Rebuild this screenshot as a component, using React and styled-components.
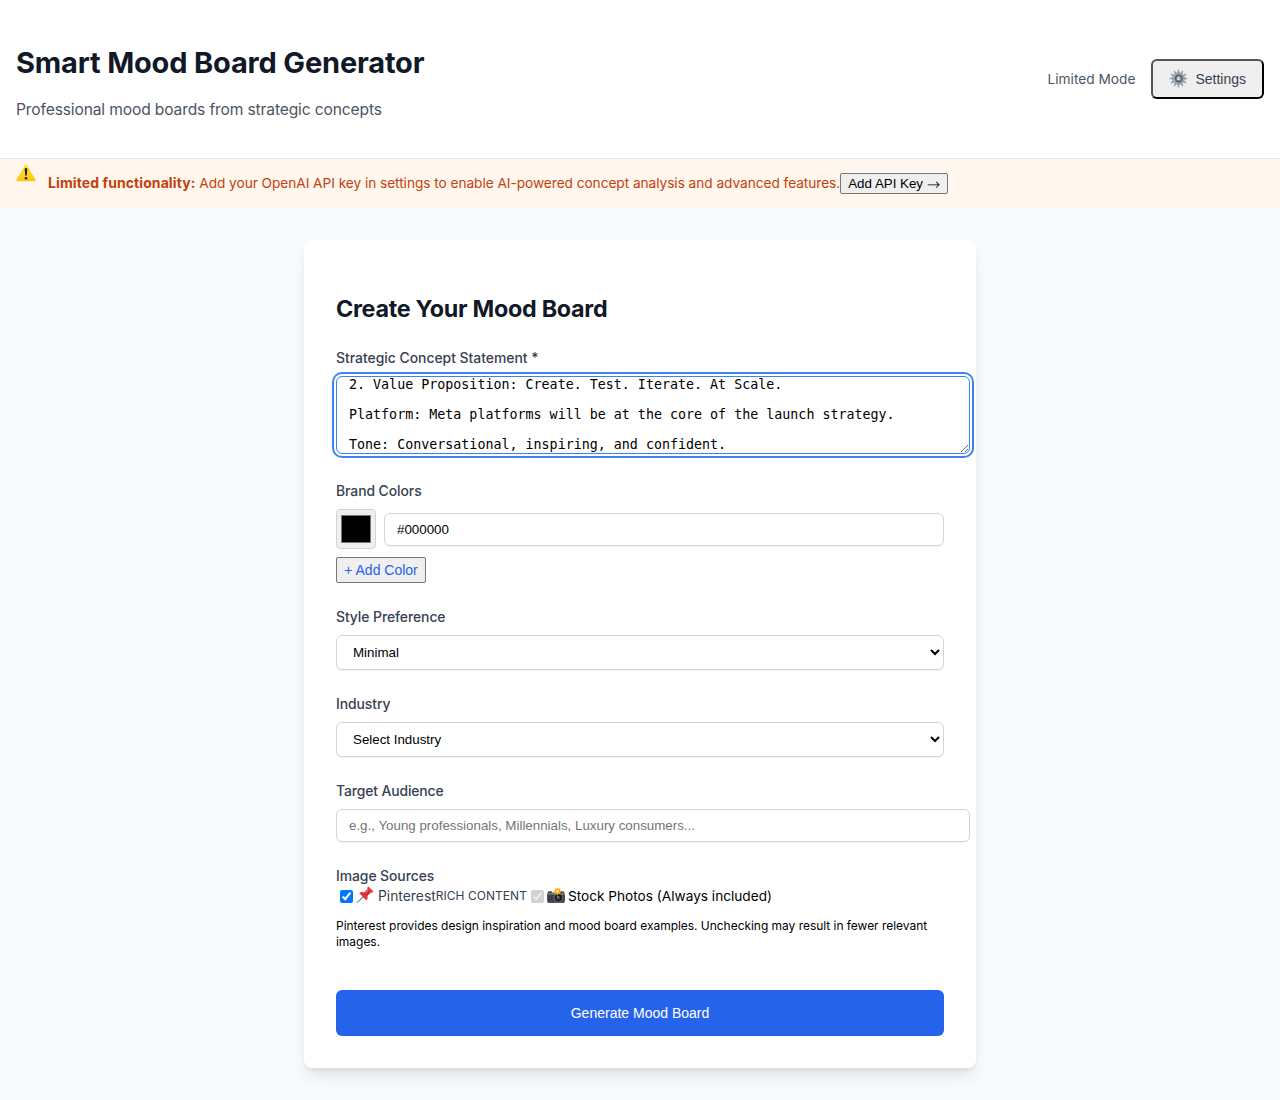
import React from "react";
import styled, { createGlobalStyle } from "styled-components";

const GlobalStyle = createGlobalStyle`
  body {
    margin: 0;
    background: #f9fafb;
    font-family: Inter, "Liberation Sans", sans-serif;
    color: #000;
  }
`;

const Page = styled.div`
  min-height: 1100px;
  background: #f9fafb;
`;

const Header = styled.header`
  display: flex;
  align-items: center;
  justify-content: space-between;
  height: 158px;
  padding: 0 16px;
  background: #fff;
  border-bottom: 1px solid #e5e7eb;
`;

const Heading = styled.div`
  padding-top: 9px;
`;

const Title = styled.h1`
  margin: 0 0 17px;
  font-size: 29px;
  line-height: 36px;
  font-weight: 700;
  letter-spacing: -0.17px;
  color: #111827;
`;

const Subtitle = styled.p`
  margin: 0;
  font-size: 15.6px;
  line-height: 24px;
  letter-spacing: -0.14px;
  color: #4b5563;
`;

const HeaderActions = styled.div`
  display: flex;
  align-items: center;
  gap: 16px;
`;

const Mode = styled.span`
  font-size: 13.7px;
  line-height: 20px;
  color: #4b5563;
`;

const SettingsButton = styled.button`
  display: flex;
  align-items: center;
  height: 40px;
  padding: 0 16px;
  gap: 7px;
  border: 2px outset #000;
  border-radius: 6px;
  background: #efefef;
  color: #374151;
  font: 14px/20px "Liberation Sans", sans-serif;
`;

const Banner = styled.div`
  display: flex;
  align-items: flex-start;
  gap: 12px;
  height: 49px;
  box-sizing: border-box;
  padding: 4px 16px 0;
  background: #fff7ed;
`;

const BannerText = styled.p`
  display: flex;
  align-items: center;
  margin: 10px 0 0;
  height: 21px;
  font-size: 14px;
  line-height: 17px;
  white-space: pre;
  color: #c2410c;
`;

const BannerLead = styled.strong`
  padding-bottom: 2px;
  letter-spacing: 0.09px;
`;

const BannerMessage = styled.span`
  font-size: 13.7px;
  letter-spacing: -0.05px;
`;

const SmallButton = styled.button`
  box-sizing: border-box;
  height: ${(p) => p.$height}px;
  width: ${(p) => p.$width}px;
  padding: 0;
  border: 1px solid #767676;
  border-radius: 2px;
  background: #efefef;
  color: ${(p) => p.$color || "#000"};
  font: ${(p) => p.$size}px "Liberation Sans", sans-serif;
  white-space: nowrap;
`;

const Arrow = styled.span`
  font-family: "DejaVu Sans", sans-serif;
  font-size: 16px;
  font-weight: 200;
  line-height: 0;
  vertical-align: -2px;
`;

const Card = styled.main`
  box-sizing: border-box;
  width: 672px;
  height: 828px;
  margin: 32px auto 0;
  padding: 53px 32px 0;
  border-radius: 8px;
  background: #fff;
  box-shadow: 0 10px 15px -3px rgba(0, 0, 0, 0.1), 0 4px 6px -4px rgba(0, 0, 0, 0.1);
`;

const CardTitle = styled.h2`
  margin: 0 0 23px;
  font-size: 23.3px;
  line-height: 32px;
  font-weight: 700;
  letter-spacing: -0.27px;
  color: #111827;
`;

const Field = styled.div`
  margin-bottom: ${(p) => p.$gap ?? 24}px;
`;

const Label = styled.label`
  display: block;
  margin-bottom: ${(p) => p.$gap ?? 8}px;
  font-size: 13.9px;
  line-height: 20px;
  font-weight: 500;
  letter-spacing: ${(p) => p.$tracking ?? -0.06}px;
  color: #374151;
`;

const Concept = styled.textarea`
  display: block;
  box-sizing: border-box;
  width: 634px;
  height: 78px;
  padding: 0 12px;
  border: 1px solid #3b82f6;
  border-radius: 6px;
  outline: none;
  box-shadow: 0 0 0 2px #fff, 0 0 0 4px #3b82f6;
  font: 13.333px/15px "DejaVu Sans Mono", monospace;
  color: #000;
  overflow: hidden;
`;

const ColorRow = styled.div`
  display: flex;
  align-items: center;
  gap: 8px;
  margin-bottom: 8px;
`;

const Swatch = styled.input`
  box-sizing: border-box;
  width: 40px;
  height: 40px;
  margin: 0;
  border: 1px solid #d1d5db;
  border-radius: 4px;
  padding: 1px 2px;
  background: #efefef;
`;

const TextInput = styled.input`
  box-sizing: border-box;
  width: ${(p) => p.$width}px;
  height: 33px;
  padding: 0 12px;
  display: block;
  border: 1px solid #d1d5db;
  border-radius: 6px;
  background: #fff;
  box-shadow: 0 1px 2px rgba(0, 0, 0, 0.05);
  font: 13.333px "Liberation Sans", sans-serif;
  color: #000;
  &::placeholder {
    color: #757575;
  }
`;

const Select = styled.select`
  display: block;
  box-sizing: border-box;
  width: 100%;
  height: 35px;
  padding: 0 0 0 12px;
  border: 1px solid #d1d5db;
  border-radius: 6px;
  background: #fff;
  box-shadow: 0 1px 2px rgba(0, 0, 0, 0.05);
  font: 13.333px "Liberation Sans", sans-serif;
  color: #000;
`;

const Sources = styled.div`
  display: flex;
  align-items: center;
  height: 20px;
  font-size: 14px;
  line-height: 20px;
  white-space: nowrap;
`;

const Check = styled.input`
  width: 13px;
  height: 13px;
  margin: 1px 3px 0 4px;
  accent-color: #0075ff;
`;

const SourceName = styled.span`
  margin-left: ${(p) => p.$gap}px;
  font-size: ${(p) => p.$size}px;
  color: ${(p) => p.$color};
`;

const Tag = styled.span`
  font-size: 12px;
  letter-spacing: 0.04px;
  color: #374151;
`;

const Hint = styled.p`
  margin: 12px 0 0;
  font-size: 12px;
  line-height: 16px;
  letter-spacing: -0.035px;
  color: #000;
`;

const Submit = styled.button`
  display: block;
  width: 100%;
  height: 46px;
  margin-top: 40px;
  padding: 0;
  border: 0;
  border-radius: 6px;
  background: #2563eb;
  color: #fff;
  font: 14px "Liberation Sans", sans-serif;
`;

const Icon = styled.svg`
  display: block;
  flex: none;
  margin-top: ${(p) => p.$shift || 0}px;
`;

const teeth = Array.from({ length: 12 }, (_, i) => i * 30);

function Gear() {
  return (
    <Icon width="19" height="19" viewBox="0 0 19 19" $shift={-2}>
      {teeth.map((a) => (
        <path key={a} d="M9 0.6h1l.7 3.4h-2.4z" fill="#94a3ae" transform={`rotate(${a} 9.5 9.5)`} />
      ))}
      <circle cx="9.5" cy="9.5" r="5.7" fill="#a9b5be" stroke="#8b98a2" strokeWidth="1" />
      <circle cx="9.7" cy="9.5" r="3.2" fill="#9ca8b1" stroke="#5c656d" strokeWidth="2" />
      <circle cx="9.7" cy="9.5" r="1.6" fill="#e9eef1" />
      <circle cx="10.1" cy="9.5" r=".6" fill="#56616a" />
    </Icon>
  );
}

function Warning() {
  return (
    <Icon width="20" height="20" viewBox="0 0 20 20">
      <defs>
        <linearGradient id="warn" x1="0" y1="0" x2="0" y2="1">
          <stop offset="0" stopColor="#ffe34b" />
          <stop offset="1" stopColor="#ffc60a" />
        </linearGradient>
      </defs>
      <path d="M9.2 1.4Q10 .5 10.8 1.4L19.6 17.1Q20 18.3 18.8 18.3H1.2Q0 18.3.4 17.1Z" fill="url(#warn)" />
      <path d="M8.7 6.2Q8.6 4.9 10 4.9T11.3 6.2L10.8 12Q10.7 12.8 10 12.8T9.2 12Z" fill="#24221c" />
      <circle cx="10" cy="15.2" r="1.3" fill="#24221c" />
    </Icon>
  );
}

function Pin() {
  return (
    <Icon width="18" height="18" viewBox="0 0 18 18" $shift={-2}>
      <path d="M7.2 9.8 8.2 10.8 1.3 17 .9 16.6Z" fill="#8799a6" stroke="#8799a6" strokeWidth=".5" />
      <path d="M3.3 7.2Q5.3 5.4 8.2 6.4L11.5 3.5Q10.7 1.5 12.2.6L17.4 5.6Q16.4 7.3 14.4 6.4L11.4 9.7Q12.5 12.7 10.5 14.4Z" fill="#df3338" />
      <path d="M8.2 6.4 11.4 9.7 14.4 6.4 11.5 3.5Z" fill="#c5222d" />
      <path d="m8.8 6.4 3.1-2.7 1 1-3 3Z" fill="#f26161" />
      <path d="M12.2.6 17.4 5.6 16 5.8 11.8 1.7Z" fill="#f04a4c" />
    </Icon>
  );
}

function Camera() {
  return (
    <Icon width="18" height="18" viewBox="0 0 18 18" $shift={-1}>
      <path d="M1.5 4.3h3.4v1.2h7V4.2h4.5l1.3 2v8.6q0 1.2-1.2 1.2h-15Q.3 16 .3 14.8V6Z" fill="#4c4d4f" />
      <path d="M.3 6.1h17.4v1.6H.3Z" fill="#77787a" />
      <path d="M.3 8h17.4v5.8H.3Z" fill="#3c3d40" />
      <circle cx="11.4" cy="10.7" r="4.5" fill="#25272b" stroke="#77797d" strokeWidth=".9" />
      <circle cx="11.4" cy="10.7" r="2.5" fill="#445061" stroke="#111318" strokeWidth="1" />
      <circle cx="10.6" cy="9.8" r=".8" fill="#8395aa" />
      <path d="m10.3 0 1.1 2 2.2-1-.7 2.3 2.3.9-2.2 1.2.7 2.1-2.3-.7-1.2 1.9L9.1 6.6l-2.3.4 1.1-2L6 3.7l2.4-.4-.5-2.2 2 1Z" fill="#ffa51f" />
      <circle cx="10.5" cy="4.1" r="1.6" fill="#ffe06c" />
    </Icon>
  );
}

const concept = `2. Value Proposition: Create. Test. Iterate. At Scale.

Platform: Meta platforms will be at the core of the launch strategy.

Tone: Conversational, inspiring, and confident.`;

export default function App() {
  return (
    <Page>
      <GlobalStyle />
      <Header>
        <Heading>
          <Title>Smart Mood Board Generator</Title>
          <Subtitle>Professional mood boards from strategic concepts</Subtitle>
        </Heading>
        <HeaderActions>
          <Mode>Limited Mode</Mode>
          <SettingsButton><Gear />Settings</SettingsButton>
        </HeaderActions>
      </Header>
      <Banner>
        <Warning />
        <BannerText>
          <BannerLead>Limited functionality:</BannerLead>
          <BannerMessage>{" Add your OpenAI API key in settings to enable AI-powered concept analysis and advanced features."}</BannerMessage>
          <SmallButton $width={108} $height={21} $size={13.333}>Add API Key <Arrow>→</Arrow></SmallButton>
        </BannerText>
      </Banner>
      <Card>
        <CardTitle>Create Your Mood Board</CardTitle>
        <Field $gap={27}>
          <Label $tracking={0}>Strategic Concept Statement *</Label>
          <Concept defaultValue={concept} spellCheck={false} />
        </Field>
        <Field>
          <Label>Brand Colors</Label>
          <ColorRow>
            <Swatch type="color" defaultValue="#000000" />
            <TextInput $width={560} defaultValue="#000000" />
          </ColorRow>
          <SmallButton $width={90} $height={26} $size={14} $color="#2563eb">+ Add Color</SmallButton>
        </Field>
        <Field>
          <Label>Style Preference</Label>
          <Select><option>Minimal</option></Select>
        </Field>
        <Field>
          <Label>Industry</Label>
          <Select><option>Select Industry</option></Select>
        </Field>
        <Field>
          <Label $tracking={-0.11}>Target Audience</Label>
          <TextInput $width={634} placeholder="e.g., Young professionals, Millennials, Luxury consumers..." />
        </Field>
        <Label $gap={0}>Image Sources</Label>
        <Sources>
          <Check type="checkbox" defaultChecked />
          <Pin />
          <SourceName $gap={4} $size={13.85} $color="#374151">Pinterest</SourceName>
          <Tag>RICH CONTENT</Tag>
          <Check type="checkbox" defaultChecked disabled />
          <Camera />
          <SourceName $gap={3} $size={13.65} $color="#000">Stock Photos (Always included)</SourceName>
        </Sources>
        <Hint>Pinterest provides design inspiration and mood board examples. Unchecking may result in fewer relevant images.</Hint>
        <Submit>Generate Mood Board</Submit>
      </Card>
    </Page>
  );
}
